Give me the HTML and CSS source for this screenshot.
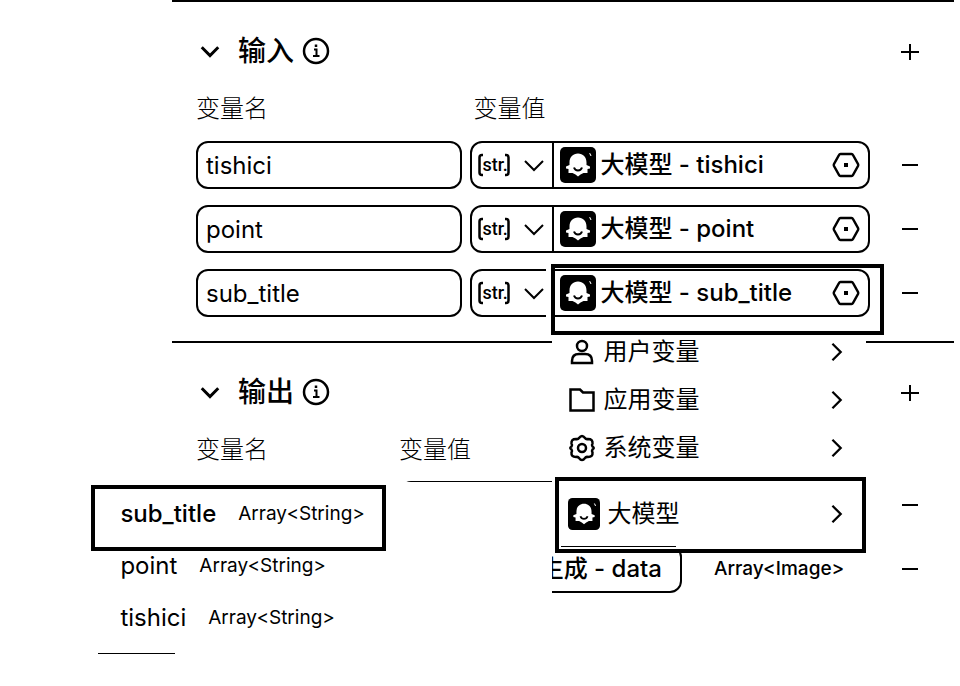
FILE: index.html
```
<!DOCTYPE html>
<html lang="zh-CN">
<head>
<meta charset="utf-8">
<meta name="viewport" content="width=device-width, initial-scale=1">
<title>输入 / 输出</title>
<link rel="stylesheet" href="styles.css">
</head>
<body>
<svg class="defs" aria-hidden="true">
  <symbol id="down" viewBox="0 0 24 24"><path d="M3 8l9 9 9-9"/></symbol>
  <symbol id="right" viewBox="0 0 24 24"><path d="M7 3l9 9-9 9"/></symbol>
  <symbol id="info" viewBox="0 0 28 28"><circle cx="14" cy="14" r="12"/><path class="thin" d="M12 12.500H14.500V19M11 19H17.500"/><path d="M14 7.500V10"/></symbol>
  <symbol id="plus" viewBox="0 0 18 18"><path d="M0 10H18M9 2V18"/></symbol>
  <symbol id="minus" viewBox="0 0 18 18"><path d="M1 9H17"/></symbol>
  <symbol id="hex" viewBox="0 0 28 28"><path d="M8.500 3H19.500Q20.500 3 21 4L26 13Q26.500 14 26 15L21 24Q20.500 25 19.500 25H8.500Q7.500 25 7 24L2 15Q1.500 14 2 13L7 4Q7.500 3 8.500 3Z"/><path class="solid" d="M12 12h4v4h-4z"/></symbol>
  <symbol id="brackets" viewBox="0 0 32 24"><path d="M5 2H4Q1.500 2 1.500 4.500V19.500Q1.500 22 4 22H5M27 2H28Q30.500 2 30.500 4.500V19.500Q30.500 22 28 22H27"/></symbol>
  <symbol id="bot" viewBox="0 0 36 36"><rect class="dark" width="36" height="36" rx="5"/><path class="light" d="M9.500 18V15.500C9.500 10 13 6.500 18 6.500S26.500 10 26.500 15.500V18L30 19.500V21.500L27.500 22V26H23.500L20.500 27.500L18 29.500L15.500 27.500L12.500 26H8.500V22L6 21.500V19.500Z"/><path class="light" d="M29 6L30.500 6.500L31.500 9H30.500Z"/><path class="thin" d="M14 20.500Q15 23.500 18 23.500T22 20.500"/></symbol>
  <symbol id="user" viewBox="0 0 28 28"><circle cx="14" cy="8" r="5"/><path d="M4 25V23Q4 16 11 16H17Q24 16 24 23V25Z"/></symbol>
  <symbol id="folder" viewBox="0 0 28 28"><path d="M2.500 3.500H12L15 6.500H25.500V24.500H2.500Z"/></symbol>
  <symbol id="gear" viewBox="0 0 28 28"><circle cx="14" cy="14" r="4"/><path d="M11 4Q14 0 17 4Q18 5.500 20 5Q25 5 24.500 9.500Q23.500 11 24.500 12.500Q27 14 24.500 15.500Q23.500 17 24.500 18.500Q25 23 20 23Q18 22.500 17 24Q14 28 11 24Q10 22.500 8 23Q3 23 3.500 18.500Q4.500 17 3.500 15.500Q1 14 3.500 12.500Q4.500 11 3.500 9.500Q3 5 8 5Q10 5.500 11 4Z"/></symbol>
</svg>

<main class="panel">
  <section class="section">
    <header class="head">
      <button class="fold" aria-label="收起输入"><svg class="icon s22 bold"><use href="#down"/></svg></button>
      <h2>输入</h2>
      <svg class="icon s28"><use href="#info"/></svg>
      <button class="act" aria-label="添加输入"><svg class="icon s18"><use href="#plus"/></svg></button>
    </header>
    <div class="row labels"><span>变量名</span><span>变量值</span></div>
    <div class="rows">
      <div class="row">
        <input class="name" aria-label="变量名" value="tishici">
        <div class="value">
          <label class="type"><svg class="icon brackets"><use href="#brackets"/></svg><select aria-label="类型"><option>str.</option></select><svg class="icon s24"><use href="#down"/></svg></label>
          <div class="source"><button class="pick"><svg class="icon s36"><use href="#bot"/></svg><span>大模型 - tishici</span><svg class="icon s28"><use href="#hex"/></svg></button></div>
        </div>
        <button class="act" aria-label="删除"><svg class="icon s18"><use href="#minus"/></svg></button>
      </div>
      <div class="row">
        <input class="name" aria-label="变量名" value="point">
        <div class="value">
          <label class="type"><svg class="icon brackets"><use href="#brackets"/></svg><select aria-label="类型"><option>str.</option></select><svg class="icon s24"><use href="#down"/></svg></label>
          <div class="source"><button class="pick"><svg class="icon s36"><use href="#bot"/></svg><span>大模型 - point</span><svg class="icon s28"><use href="#hex"/></svg></button></div>
        </div>
        <button class="act" aria-label="删除"><svg class="icon s18"><use href="#minus"/></svg></button>
      </div>
      <div class="row">
        <input class="name" aria-label="变量名" value="sub_title">
        <div class="value">
          <label class="type"><svg class="icon brackets"><use href="#brackets"/></svg><select aria-label="类型"><option>str.</option></select><svg class="icon s24"><use href="#down"/></svg></label>
          <div class="source open">
            <button class="pick"><svg class="icon s36"><use href="#bot"/></svg><span>大模型 - sub_title</span><svg class="icon s28"><use href="#hex"/></svg></button>
            <div class="menu">
              <button class="item"><svg class="icon s28"><use href="#user"/></svg><span>用户变量</span><svg class="icon s22"><use href="#right"/></svg></button>
              <button class="item"><svg class="icon s28"><use href="#folder"/></svg><span>应用变量</span><svg class="icon s22"><use href="#right"/></svg></button>
              <button class="item"><svg class="icon s28"><use href="#gear"/></svg><span>系统变量</span><svg class="icon s22"><use href="#right"/></svg></button>
              <button class="item current"><svg class="icon s32"><use href="#bot"/></svg><span>大模型</span><svg class="icon s22"><use href="#right"/></svg></button>
              <div class="submenu">
                <button class="leaf current"><span>sub_title</span><small>Array&lt;String&gt;</small></button>
                <button class="leaf"><span>point</span><small>Array&lt;String&gt;</small></button>
                <button class="leaf"><span>tishici</span><small>Array&lt;String&gt;</small></button>
              </div>
            </div>
          </div>
        </div>
        <button class="act" aria-label="删除"><svg class="icon s18"><use href="#minus"/></svg></button>
      </div>
    </div>
  </section>

  <section class="section">
    <header class="head">
      <button class="fold" aria-label="收起输出"><svg class="icon s22 bold"><use href="#down"/></svg></button>
      <h2>输出</h2>
      <svg class="icon s28"><use href="#info"/></svg>
      <button class="act" aria-label="添加输出"><svg class="icon s18"><use href="#plus"/></svg></button>
    </header>
    <div class="row out labels"><span>变量名</span><span>变量值</span></div>
    <div class="rows">
      <div class="row out">
        <span></span>
        <button class="result" aria-label="变量值"></button>
        <span></span>
        <button class="act" aria-label="删除"><svg class="icon s18"><use href="#minus"/></svg></button>
      </div>
      <div class="row out">
        <span></span>
        <button class="result">生成 - data</button>
        <span class="kind">Array&lt;Image&gt;</span>
        <button class="act" aria-label="删除"><svg class="icon s18"><use href="#minus"/></svg></button>
      </div>
    </div>
  </section>
</main>
</body>
</html>
```
FILE: styles.css
```
* { box-sizing: border-box; }

body {
  min-height: 100vh;
  margin: 0;
  background: #fff;
  color: #000;
  font: 24px/32px Inter, "Noto Sans CJK SC", sans-serif;
}

button, input, select {
  margin: 0;
  padding: 0;
  border: 0;
  background: none;
  color: inherit;
  font: inherit;
}

.defs { position: absolute; width: 0; height: 0; }

.icon {
  flex: none;
  fill: none;
  stroke: #000;
  stroke-width: 2px;
}
.s18 { width: 18px; height: 18px; }
.s22 { width: 22px; height: 22px; stroke-width: 2.5px; }
.s24 { width: 24px; height: 24px; }
.s28 { width: 28px; height: 28px; stroke-width: 2.5px; }
.s32 { width: 32px; height: 32px; }
.s36 { width: 36px; height: 36px; }
.bold { stroke-width: 3.2px; }
.thin { stroke-width: 2px; }
.solid, .dark { fill: #000; stroke: none; }
.light { fill: #fff; stroke: none; }

.panel { margin: 0 6px 0 172px; }

.section {
  padding: 29px 24px 24px;
  border-top: 2px solid #000;
}

.head {
  display: flex;
  align-items: center;
  height: 40px;
}
.head h2 {
  margin: 0 8px 0 17px;
  font-size: 28px;
  font-weight: 500;
}
.fold { display: flex; padding-left: 3px; }
.head .act { margin-left: auto; }

.act {
  display: flex;
  align-items: center;
  justify-content: center;
  width: 40px;
  height: 40px;
}

.row {
  display: grid;
  grid-template-columns: 2fr 3fr 52px;
  align-items: center;
  column-gap: 8px;
}
.row .act { margin-left: 12px; }
.labels {
  height: 32px;
  margin: 22px 0 16px;
  font-weight: 300;
}
.labels span:nth-child(2) { padding-left: 3px; }
.rows { display: grid; gap: 16px; }

.name {
  width: 100%;
  height: 48px;
  padding: 0 8px;
  border: 2px solid #000;
  border-radius: 12px;
}

.value {
  display: flex;
  height: 48px;
  border: 2px solid #000;
  border-radius: 12px;
}
.type {
  position: relative;
  display: flex;
  flex: none;
  align-items: center;
  justify-content: space-between;
  width: 80px;
  padding: 0 6px 0 10px;
}
.type select {
  appearance: none;
  width: 32px;
  font: 500 18px/24px Roboto, sans-serif;
}
.brackets {
  position: absolute;
  left: 6px;
  width: 32px;
  height: 24px;
  stroke-width: 2.5px;
}

.source {
  position: relative;
  flex: 1;
  min-width: 0;
  border-left: 2px solid #000;
}
.pick {
  display: flex;
  align-items: center;
  gap: 4px;
  width: 100%;
  height: 100%;
  padding: 0 8px 0 6px;
  font-weight: 500;
  text-align: left;
  white-space: nowrap;
}
.pick span { flex: 1; }

/* Emphasis frame round the open field */
.open::after {
  content: "";
  position: absolute;
  z-index: 3;
  inset: -7px -16px -20px -3px;
  border: 4px solid #000;
  box-shadow: -5px 0 0 #fff;
  pointer-events: none;
}

.menu {
  position: absolute;
  z-index: 2;
  top: calc(100% + 13px);
  right: 2px;
  left: -2px;
  background: #fff;
}
.item {
  display: flex;
  align-items: center;
  gap: 7px;
  width: 100%;
  height: 48px;
  padding: 0 18px 0 16px;
  text-align: left;
}
.item span { flex: 1; }
.item.current {
  position: relative;
  width: auto;
  min-width: calc(100% - 3px);
  height: 76px;
  margin: 5px 0 0 3px;
  padding: 0 14px 2px 9px;
  border: 4px solid #000;
}
.item.current::after {
  content: "";
  position: absolute;
  bottom: 2px;
  left: 2px;
  width: 115px;
  border-bottom: 1px solid #000;
}

.submenu {
  position: absolute;
  top: 154px;
  right: 100%;
  display: flex;
  flex-direction: column;
  align-items: flex-start;
  gap: 22px;
  width: 461px;
  padding: 3px 0 21px;
  background: #fff;
}
.submenu::after {
  content: "";
  position: absolute;
  bottom: 0;
  left: 7px;
  width: 77px;
  border-bottom: 1px solid #000;
}
.leaf {
  display: flex;
  align-items: center;
  gap: 22px;
  height: 30px;
  padding-left: 29px;
}
.leaf small { font-size: 19px; font-weight: 400; }
.leaf.current {
  height: 66px;
  margin-bottom: -22px;
  padding: 0 17px 8px 25px;
  border: 4px solid #000;
  font-weight: 500;
}

.row.out {
  grid-template-columns: 195px 283px 1fr 52px;
}
.out.labels { margin-bottom: 15px; }
.out.labels span:nth-child(2) { padding: 0; }
.result {
  height: 48px;
  padding: 0 18px;
  border: 2px solid #000;
  border-radius: 12px;
  font-weight: 500;
  text-align: right;
}
.kind {
  padding-left: 24px;
  font-size: 19px;
  font-weight: 500;
}
```
